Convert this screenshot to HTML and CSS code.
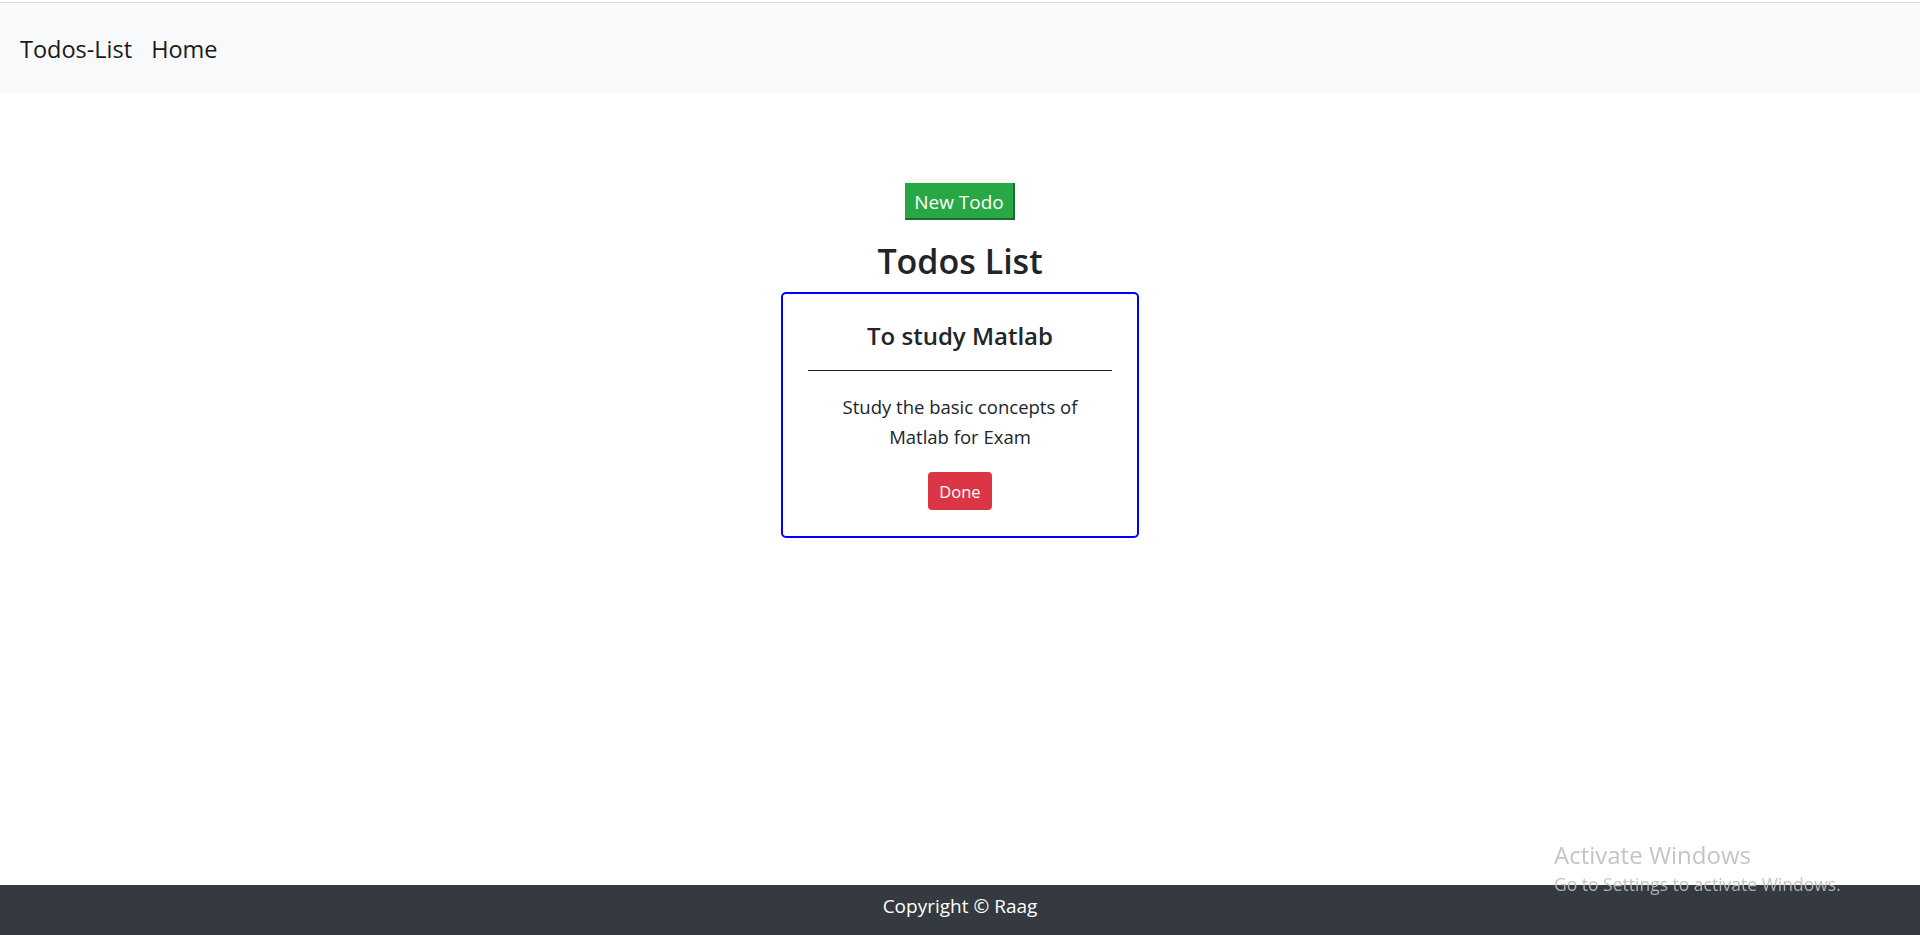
FILE: index.html
```html
<!DOCTYPE html>
<html lang="en">
<head>
<meta charset="utf-8">
<title>Todos-List</title>
<link rel="stylesheet" href="styles.css">
</head>
<body>
<nav class="navbar">
  <a class="brand" href="#">Todos-List</a>
  <a class="nav-link" href="#">Home</a>
</nav>
<main class="main">
  <button class="btn-new">New Todo</button>
  <h2 class="page-title">Todos List</h2>
  <div class="card">
    <h5 class="card-title">To study Matlab</h5>
    <hr class="card-rule">
    <p class="card-text">Study the basic concepts of Matlab for Exam</p>
    <button class="btn-done">Done</button>
  </div>
</main>
<footer class="footer">Copyright © Raag</footer>
<div class="watermark">
  <div class="wm-title">Activate Windows</div>
  <div class="wm-sub">Go to Settings to activate Windows.</div>
</div>
</body>
</html>
```
FILE: styles.css
```css
* { box-sizing: border-box; }
html, body { margin: 0; padding: 0; }
body {
  font-family: "Open Sans", "Noto Sans", sans-serif;
  color: #212529;
  background: #fff;
  font-size: 20px;
  line-height: 1.5;
  min-height: 935px;
  padding-top: 2px;
}
.navbar {
  height: 91px;
  background: #f8f9fa;
  border-top: 1px solid #dcdee0;
  display: flex;
  align-items: center;
  padding-left: 20px;
  padding-top: 3px;
  gap: 19px;
}
.brand, .nav-link {
  font-size: 23.5px;
  color: #1a1a1a;
  text-decoration: none;
  line-height: 1.5;
}
.main {
  display: flex;
  flex-direction: column;
  align-items: center;
  padding-top: 90px;
}
.btn-new {
  font-family: inherit;
  font-size: 19px;
  color: #fff;
  background: #28a745;
  border: 0;
  border-right: 2px solid #1b6a2e;
  border-bottom: 2px solid #1b6a2e;
  width: 110px;
  height: 37px;
  padding: 3px 0 0;
  line-height: 1;
}
.page-title {
  font-size: 34px;
  font-weight: 600;
  line-height: 48px;
  margin: 17px 0 7px;
}
.card {
  width: 358px;
  border: 2px solid #0000ff;
  border-radius: 5px;
  padding: 27px 25px 26px;
  display: flex;
  flex-direction: column;
  align-items: center;
  text-align: center;
}
.card-title {
  font-size: 24px;
  font-weight: 600;
  line-height: 30px;
  margin: 0;
}
.card-rule {
  width: 100%;
  border: 0;
  border-top: 1px solid #222;
  margin: 19px 0 21px;
}
.card-text {
  margin: 0 0 20px;
  font-size: 18.5px;
  line-height: 30px;
  max-width: 270px;
}
.btn-done {
  font-family: inherit;
  font-size: 16.5px;
  color: #fff;
  background: #dc3545;
  border: 0;
  border-radius: 4px;
  width: 64px;
  height: 38px;
  padding: 0;
}
.footer {
  position: fixed;
  left: 0;
  right: 0;
  bottom: 0;
  height: 50px;
  background: #343a40;
  color: #fff;
  text-align: center;
  font-size: 19px;
  line-height: 42px;
}
.watermark {
  position: fixed;
  left: 1554px;
  top: 838px;
  color: rgba(190, 190, 190, 0.9);
  font-family: "Open Sans", sans-serif;
  pointer-events: none;
}
.wm-title { font-size: 24px; line-height: 34px; }
.wm-sub { font-size: 17.5px; line-height: 24px; }
```
